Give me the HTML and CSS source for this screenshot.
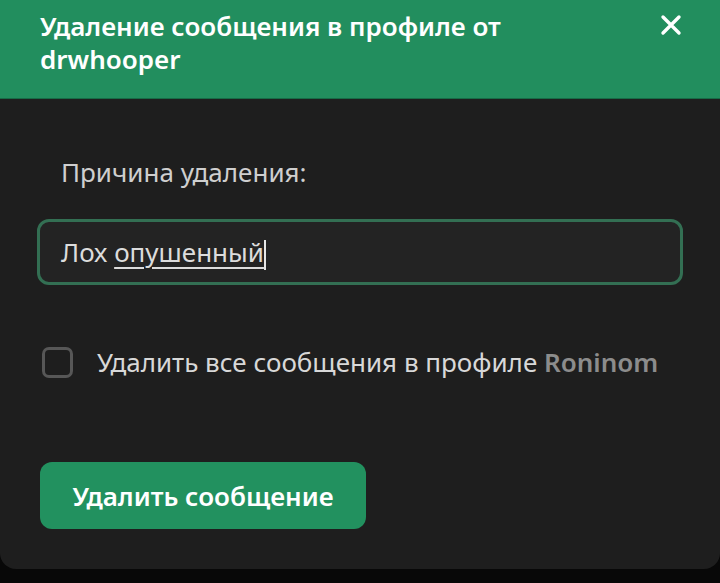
FILE: index.html
```html
<!DOCTYPE html>
<html lang="ru">

<head>
    <meta charset="UTF-8">
    <meta name="viewport" content="width=device-width, initial-scale=1.0">
    <title>Удаление сообщения</title>
    <link rel="stylesheet" href="styles.css">
</head>

<body>
    <div class="modal">
        <div class="modal-head">
            <h2 class="modal-title">Удаление сообщения в профиле от drwhooper</h2>
            <span class="modal-close">
                <svg width="22" height="22" viewBox="0 0 22 22">
                    <path d="M3 3 L19 19 M19 3 L3 19" stroke="#fff" stroke-width="3.4" stroke-linecap="round" />
                </svg>
            </span>
        </div>

        <div class="modal-body">
            <label class="reason-label">Причина удаления:</label>
            <div class="reason-input">
                <span>Лох </span><span class="composing">опушенный</span><span class="caret"></span>
            </div>

            <label class="check-row">
                <span class="check-box"></span>
                <span class="check-text">Удалить все сообщения в профиле <b>Roninom</b></span>
            </label>

            <button class="btn-delete">Удалить сообщение</button>
        </div>
    </div>
</body>

</html>
```

FILE: styles.css
```css
* {
    margin: 0;
    padding: 0;
    box-sizing: border-box;
}

body {
    background-color: #080808;
    font-family: "Noto Sans", "Open Sans", sans-serif;
    height: 583px;
    overflow: hidden;
}

.modal {
    width: 720px;
    height: 569px;
    background-color: #1e1e1e;
    border-radius: 0 0 16px 16px;
    overflow: hidden;
}

.modal-head {
    display: flex;
    justify-content: space-between;
    align-items: flex-start;
    height: 99px;
    padding: 10px 38px 0 40px;
    background-color: #228e5e;
    border-bottom: 1px solid #176b46;
}

.modal-title {
    max-width: 560px;
    font-size: 26px;
    font-weight: 600;
    line-height: 33px;
    color: #ffffff;
}

.modal-close {
    display: block;
    margin-top: 4px;
    cursor: pointer;
}

.modal-body {
    padding: 0 37px;
}

.reason-label {
    display: block;
    margin: 58px 0 0 24px;
    font-size: 26px;
    line-height: 30px;
    color: #cfcfcf;
}

.reason-input {
    display: flex;
    align-items: center;
    height: 66px;
    margin-top: 32px;
    padding: 0 21px;
    border: 3px solid #336f53;
    border-radius: 12px;
    background-color: #232323;
    font-size: 26px;
    color: #dcdcdc;
    white-space: pre;
}

.composing {
    text-decoration: underline;
    text-underline-offset: 5px;
    text-decoration-thickness: 2px;
}

.caret {
    width: 2px;
    height: 30px;
    margin-top: 6px;
    background-color: #e6e6e6;
}

.check-row {
    display: flex;
    align-items: center;
    margin: 59px 0 0 5px;
    cursor: pointer;
}

.check-box {
    width: 31px;
    height: 31px;
    border: 3px solid #575757;
    border-radius: 7px;
}

.check-text {
    margin-left: 24px;
    font-size: 26px;
    color: #d8d8d8;
}

.check-text b {
    font-weight: 600;
    color: #8c8c8c;
}

.btn-delete {
    display: block;
    width: 326px;
    height: 67px;
    margin: 82px 0 0 3px;
    border: none;
    border-radius: 12px;
    background-color: #22915f;
    font-family: inherit;
    font-size: 26px;
    font-weight: 600;
    color: #ffffff;
    cursor: pointer;
}
```
